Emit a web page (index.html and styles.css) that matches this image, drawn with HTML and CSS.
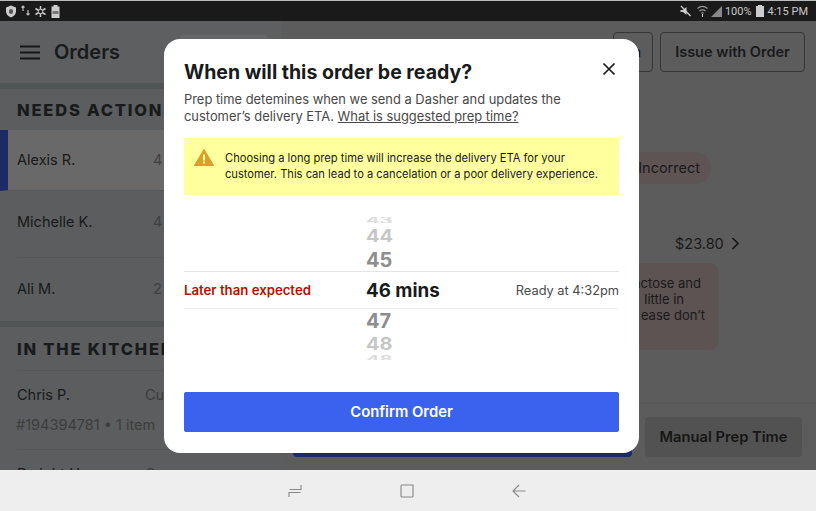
FILE: index.html
```html
<!DOCTYPE html>
<html lang="en">
<head>
  <meta charset="UTF-8">
  <title>Orders</title>
  <link rel="stylesheet" href="styles.css">
</head>
<body>
  <!-- Status bar -->
  <div class="status-bar">
    <div class="status-icons">
      <svg width="12" height="13" viewBox="0 0 12 13"><path d="M6 0.500 11 2.500V6.500C11 9.500 8.500 11.500 6 12.500 3.500 11.500 1 9.500 1 6.500V2.500Z" fill="#ccc"/><rect x="4" y="4" width="4" height="5" rx="2" fill="#555"/></svg>
      <svg width="10" height="12" viewBox="0 0 10 12"><path d="M2 1V6M0.500 2.500 2 1 3.500 2.500M7 5V10M5.500 8.500 7 10 8.500 8.500" stroke="#bbb" stroke-width="1.200" fill="none"/></svg>
      <svg width="13" height="13" viewBox="0 0 13 13"><path d="M6.500 1V12M1.500 3.500 11.500 9.500M11.500 3.500 1.500 9.500" stroke="#ccc" stroke-width="1.500"/><circle cx="6.500" cy="6.500" r="2.200" fill="#1a1a1a" stroke="#ccc"/></svg>
      <svg width="9" height="13" viewBox="0 0 9 13"><path d="M2.500 0H6.500V1.500H8.500V13H0.500V1.500H2.500Z" fill="#ccc"/><rect x="1.500" y="6" width="6" height="3" fill="#777"/></svg>
    </div>
    <div class="status-right">
      <svg width="11" height="12" viewBox="0 0 11 12"><path d="M0.500 5H3L6.500 2V10L3 7H0.500Z" fill="#ccc"/><path d="M1 1 10.500 11" stroke="#ccc" stroke-width="1.300"/></svg>
      <svg class="status-wifi" width="11" height="12" viewBox="0 0 11 12"><path d="M0.500 3.500C3.500 1 7.500 1 10.500 3.500M2.500 6C4.500 4.500 6.500 4.500 8.500 6M4.300 8.200C5 7.700 6 7.700 6.700 8.200" stroke="#999" stroke-width="1.200" fill="none"/><path d="M5.500 9V12" stroke="#ccc"/></svg>
      <svg class="status-signal" width="11" height="12" viewBox="0 0 11 12"><path d="M11 1V12H0Z" fill="#888"/></svg>
      <span>100%</span>
      <svg class="status-batt" width="8" height="12" viewBox="0 0 8 12"><path d="M2 0H6V1H8V12H0V1H2Z" fill="#ccc"/></svg>
      <span>4:15 PM</span>
    </div>
  </div>

  <div class="app">
    <!-- Order list -->
    <aside class="sidebar">
      <div class="sidebar-top">
        <svg width="22" height="15" viewBox="0 0 22 15"><path d="M1 1.500H21M1 7.500H21M1 13.500H21" stroke="#161718" stroke-width="2"/></svg>
        <h2>Orders</h2>
        <div class="search-box"></div>
      </div>

      <section class="group">
        <h3>NEEDS ACTION</h3>
        <div class="order order-selected"><span class="name">Alexis R.</span><span class="col">4</span></div>
        <div class="order order-tall"><span class="name">Michelle K.</span><span class="col">4</span></div>
        <div class="order order-last"><span class="name">Ali M.</span><span class="col">2</span></div>
      </section>

      <section class="group">
        <h3 class="kitchen">IN THE KITCHEN</h3>
        <div class="order-two">
          <div class="order-line"><span class="name">Chris P.</span><span class="col-type">Cu</span></div>
          <div class="sub">#194394781 • 1 item</div>
        </div>
        <div class="order-two">
          <div class="order-line"><span class="name">Dwight H.</span><span class="col-type">Cu</span></div>
        </div>
      </section>
    </aside>

    <!-- Order detail, mostly behind the dialog -->
    <main class="detail">
      <div class="detail-top">
        <button class="ghost-btn ghost-small">n</button>
        <button class="ghost-btn">Issue with Order</button>
      </div>
      <div class="detail-body">
        <div class="pill">Incorrect</div>
        <div class="price">$23.80 <svg width="9" height="13" viewBox="0 0 9 13"><path d="M1.500 1 7 6.500 1.500 12" stroke="#171717" stroke-width="1.600" fill="none"/></svg></div>
        <div class="note">actose and<br><span class="note-2">little in</span><br><span class="note-3">ease don’t</span></div>
      </div>
      <div class="detail-foot">
        <div class="foot-blue"></div>
        <button class="foot-manual">Manual Prep Time</button>
      </div>
    </main>

    <!-- Dialog -->
    <div class="modal">
      <div class="modal-head">
        <h1>When will this order be ready?</h1>
        <svg width="14" height="14" viewBox="0 0 14 14"><path d="M1.500 1.500 12.500 12.500M12.500 1.500 1.500 12.500" stroke="#191919" stroke-width="1.700"/></svg>
      </div>
      <p class="intro">Prep time detemines when we send a Dasher and updates the customer’s delivery ETA. <u>What is suggested prep time?</u></p>
      <div class="warning">
        <svg width="20" height="17" viewBox="0 0 20 17"><path d="M10 1 19.200 16.500H0.800Z" fill="#dd9f2b" stroke="#dd9f2b" stroke-width="1.500" stroke-linejoin="round"/><rect x="9" y="5.500" width="2" height="6" fill="#ffff9e"/><rect x="9" y="12.500" width="2" height="2" fill="#ffff9e"/></svg>
        <p>Choosing a long prep time will increase the delivery ETA for your customer. This can lead to a cancelation or a poor delivery experience.</p>
      </div>
      <div class="wheel">
        <div class="num num-43"><span>43</span></div>
        <div class="num num-44">44</div>
        <div class="num num-45">45</div>
        <div class="wheel-current">
          <span class="late">Later than expected</span>
          <span class="mins">46 mins</span>
          <span class="ready">Ready at 4:32pm</span>
        </div>
        <div class="num num-47">47</div>
        <div class="num num-48">48</div>
        <div class="num num-49"><span>48</span></div>
      </div>
      <button class="confirm">Confirm Order</button>
    </div>
  </div>

  <!-- Android nav bar -->
  <div class="nav-bar">
    <svg width="14" height="14" viewBox="0 0 14 14"><path d="M13 1V5.500H1.500M1 13V8.500H12.500" stroke="#888" stroke-width="1.100" fill="none"/></svg>
    <svg width="14" height="14" viewBox="0 0 14 14"><path d="M2 1H13V12Q13 13 12 13H2Q1 13 1 12V2Q1 1 2 1Z" stroke="#888" stroke-width="1.100" fill="none"/></svg>
    <svg width="14" height="14" viewBox="0 0 14 14"><path d="M7 1 1 7 7 13M1 7H13.500" stroke="#888" stroke-width="1.100" fill="none"/></svg>
  </div>
</body>
</html>
```

FILE: styles.css
```css
* {
  margin: 0;
  padding: 0;
  box-sizing: border-box;
}
body {
  width: 816px;
  height: 511px;
  overflow: hidden;
  display: flex;
  flex-direction: column;
  font-family: 'Inter', 'Liberation Sans', sans-serif;
  color: #191a1b;
  background: #5c5c5c;
}

/* === STATUS BAR === */
.status-bar {
  height: 21px;
  flex: none;
  background: #1a1a1a;
  border-top: 1px solid #bbb;
  display: flex;
  justify-content: space-between;
  align-items: center;
  padding: 0 8px 0 5px;
  color: #c8c8c8;
  font-family: 'Roboto', sans-serif;
  font-size: 11px;
}
.status-icons {
  display: flex;
  align-items: center;
  gap: 3.500px;
}
.status-right {
  display: flex;
  align-items: center;
  gap: 3px;
}
.status-wifi { margin-left: 3px; }
.status-batt { margin: 0 1px; }

/* === APP === */
.app {
  position: relative;
  flex: 1;
  display: flex;
  min-height: 0;
}

/* === SIDEBAR === */
.sidebar {
  width: 281px;
  flex: none;
  background: #525556;
  overflow: hidden;
  display: flex;
  flex-direction: column;
  gap: 6px;
}
.sidebar-top {
  position: relative;
  height: 62px;
  flex: none;
  background: #5d5f60;
  display: flex;
  align-items: center;
  padding-left: 19px;
  gap: 13px;
}
.sidebar-top h2 {
  font-size: 20px;
  font-weight: 600;
}
.search-box {
  position: absolute;
  left: 180px;
  top: 14px;
  width: 88px;
  height: 34px;
  border-radius: 4px;
  background: #656768;
}
.group {
  background: #5b5d5e;
}
.group h3 {
  height: 41px;
  padding: 11px 0 0 17px;
  font-size: 16.500px;
  line-height: 20px;
  font-weight: 800;
  letter-spacing: 1.800px;
  white-space: nowrap;
}
.group h3.kitchen {
  height: 43px;
  padding-top: 12px;
}
.order {
  height: 67px;
  margin-left: 17px;
  padding-top: 21px;
  display: flex;
  border-bottom: 1px solid #555758;
  font-size: 14.500px;
  line-height: 20px;
}
.name { width: 136px; white-space: nowrap; }
.col { color: #3f3f3f; }
.order-selected {
  height: 61px;
  margin-left: 0;
  padding-top: 20px;
  background: #696969;
  border-left: 8px solid #1d2a66;
  padding-left: 9px;
}
.order-last {
  height: 63px;
  border-bottom: 0;
}
.order-two {
  height: 79px;
  margin-left: 17px;
  padding-top: 14px;
  border-top: 1px solid #555758;
  font-size: 14.500px;
  line-height: 20px;
}
.order-line { display: flex; }
.col-type { color: #3d3d3d; margin-left: -8px; }
.sub {
  margin-top: 10px;
  margin-left: -1px;
  color: #3d3d3d;
}

/* === DETAIL === */
.detail {
  flex: 1;
  display: flex;
  flex-direction: column;
  background: #5c5c5c;
}
.detail-top {
  display: flex;
  justify-content: flex-end;
  gap: 7px;
  padding: 11px 11px 0 0;
  height: 62px;
}
.ghost-btn {
  height: 40px;
  width: 145px;
  padding-bottom: 2px;
  background: none;
  border: 1px solid #353535;
  border-radius: 4px;
  font: 600 14.500px 'Inter', sans-serif;
  color: #191a1b;
}
.ghost-small {
  width: 40px;
  padding-right: 11px;
  text-align: right;
}
.detail-body {
  flex: 1;
  position: relative;
}
.pill {
  position: absolute;
  left: 300px;
  top: 69px;
  width: 130px;
  height: 32px;
  padding-right: 11px;
  border-radius: 16px;
  background: #5e5454;
  text-align: right;
  font-size: 14.500px;
  line-height: 32px;
}
.price {
  position: absolute;
  left: 394px;
  top: 151px;
  font-size: 14.500px;
  line-height: 20px;
}
.price svg { margin-left: 3px; vertical-align: -1px; }
.note {
  position: absolute;
  left: 300px;
  top: 180px;
  width: 138px;
  height: 87px;
  padding: 12px 18px 0 0;
  border-radius: 10px;
  background: #5d5353;
  text-align: right;
  font-size: 13px;
  line-height: 16px;
}
.note-2 { margin-right: 17px; }
.note-3 { margin-right: -4px; }
.detail-foot {
  flex: none;
  height: 67px;
  border-top: 1px solid #565656;
  display: flex;
  gap: 13px;
  padding: 13px 14px 0 12px;
}
.foot-blue {
  width: 339px;
  height: 40px;
  border-radius: 4px;
  background: #1d2a66;
}
.foot-manual {
  width: 157px;
  height: 40px;
  border: 0;
  border-radius: 4px;
  background: #525252;
  font: 600 14.700px 'Inter', sans-serif;
  color: #161616;
}

/* === DIALOG === */
.modal {
  position: absolute;
  left: 164px;
  top: 18px;
  width: 475px;
  height: 414px;
  padding: 20px 20px 0;
  background: #fff;
  border-radius: 16px;
}
.modal-head {
  display: flex;
  justify-content: space-between;
  align-items: flex-start;
  padding-right: 3px;
}
.modal-head svg { margin-top: 3px; }
.modal-head h1 {
  font-size: 19.500px;
  line-height: 26px;
  font-weight: 700;
}
.intro {
  margin-top: 6px;
  font-size: 12.900px;
  line-height: 17px;
  color: #494949;
}
.warning {
  margin-top: 13px;
  height: 57px;
  background: #ffff9e;
  display: flex;
  align-items: center;
  gap: 11px;
  padding: 0 10px;
}
.warning svg { margin-bottom: 18px; flex: none; }
.warning p {
  font-size: 11.150px;
  line-height: 15.500px;
  color: #191a1b;
}

/* === WHEEL === */
.wheel {
  margin-top: 22px;
  height: 143px;
  overflow: hidden;
}
.num {
  padding-left: 182px;
  font-size: 20px;
  font-weight: 700;
  overflow: hidden;
}
.num-43 { height: 6px; line-height: 6px; color: #ddd; }
.num-43 span { display: block; transform: scaleY(.55); }
.num-44 { height: 23px; line-height: 27px; color: #c6c6c6; transform: scaleY(.85); }
.num-45 { height: 25px; line-height: 29px; color: #8e8e8e; }
.wheel-current {
  height: 38px;
  border-top: 1px solid #e4e4e4;
  border-bottom: 1px solid #f0f0f0;
  display: grid;
  grid-template-columns: 182px 1fr auto;
  align-items: center;
}
.late {
  font-size: 13.200px;
  font-weight: 600;
  color: #b71000;
}
.mins {
  font-size: 18.750px;
  font-weight: 700;
}
.ready {
  font-size: 12.800px;
  color: #494949;
}
.num-47 { height: 25px; line-height: 25px; color: #8e8e8e; }
.num-48 { height: 21px; line-height: 21px; color: #c6c6c6; transform: scaleY(.85); }
.num-49 { height: 8px; line-height: 8px; color: #ddd; }
.num-49 span { display: block; transform: scaleY(.55); }
.confirm {
  display: block;
  width: 100%;
  height: 40px;
  margin-top: 32px;
  border: 0;
  border-radius: 2px;
  background: #3a62ee;
  color: #fff;
  font: 600 14.800px 'Inter', sans-serif;
}

/* === NAV BAR === */
.nav-bar {
  height: 41px;
  flex: none;
  background: #eeeeee;
  display: flex;
  justify-content: center;
  align-items: center;
  gap: 98px;
  padding-right: 2px;
}
```
